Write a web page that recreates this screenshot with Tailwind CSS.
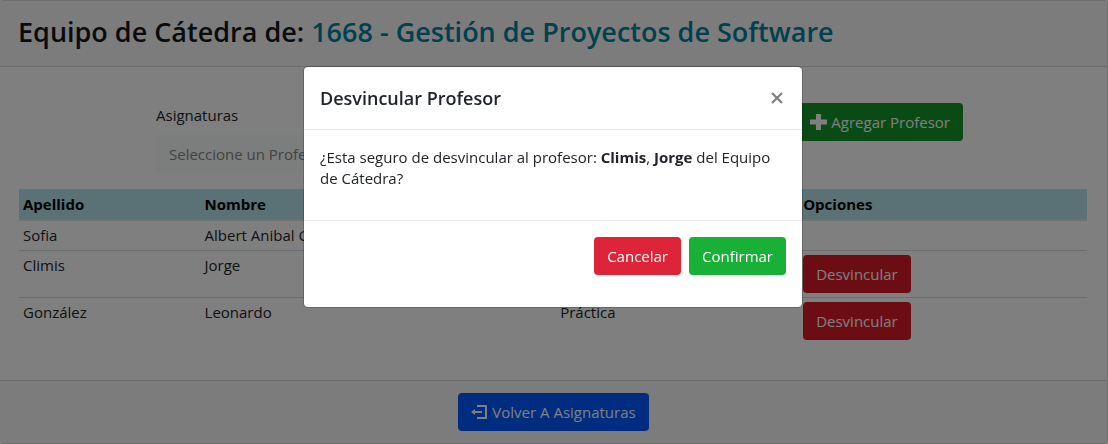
<!DOCTYPE html>
<html lang="es">
<head>
<meta charset="utf-8">
<meta name="viewport" content="width=device-width, initial-scale=1">
<title>Equipo de Cátedra</title>
<script src="https://cdn.jsdelivr.net/npm/@tailwindcss/browser@4"></script>
</head>
<body class="bg-white font-['Open_Sans',sans-serif] text-[15px] leading-[21px] text-[#212529]">
<main class="flex min-h-screen flex-col rounded border border-l-0 border-[#dfdfdf]">
  <header class="border-b border-[#d4d4d4] bg-[#f9f9f9] pt-2 pr-5 pb-3 pl-[18px]">
    <h1 class="text-[27px] leading-[45px] font-semibold text-[#141619]">Equipo de Cátedra de: <span class="text-[#00839a]">1668 - Gestión de Proyectos de Software</span></h1>
  </header>
  <section class="grow pt-9 pr-5 pb-9 pl-[19px]">
    <div class="mb-4 flex items-start justify-between pr-[124px] pl-[137px]">
      <div class="w-40">
        <label for="profesor" class="mt-[2px] mb-[9px] block">Asignaturas</label>
        <input id="profesor" type="text" placeholder="Seleccione un Profesor" class="h-[38px] w-full rounded bg-[#f8fafb] pl-[13px] placeholder:text-[#868686]">
      </div>
      <button type="button" class="flex h-[38px] items-center gap-1 rounded bg-[#14952a] px-[13px] text-white">
        <svg class="h-4 w-[17px]" viewBox="0 0 17 16" fill="currentColor" aria-hidden="true"><path d="M6 0h5v5.500h6v5h-6V16H6v-5.500H0v-5h6z"/></svg>
        Agregar Profesor
      </button>
    </div>
    <table class="w-full table-fixed border-separate border-spacing-0 text-left [&_td]:p-1 [&_td]:align-top [&_th]:p-1">
      <colgroup><col class="w-[17%]"><col class="w-[33.300%]"><col class="w-[22.750%]"><col></colgroup>
      <thead>
        <tr class="bg-[#b4e2ec] text-black [&>*]:border-t [&>*]:border-b-2 [&>*]:border-t-[#d0dfe3] [&>*]:border-b-[#dee2e6]">
          <th scope="col">Apellido</th><th scope="col">Nombre</th><td></td><th scope="col">Opciones</th>
        </tr>
      </thead>
      <tbody>
        <tr><td>Sofia</td><td>Albert Anibal G</td><td></td><td></td></tr>
        <tr class="[&>td]:border-t [&>td]:border-[#d5d8dc]"><td>Climis</td><td>Jorge</td><td></td><td><button type="button" class="block h-[38px] rounded bg-[#d71a27] px-[13px] text-white">Desvincular</button></td></tr>
        <tr class="[&>td]:border-t [&>td]:border-[#d5d8dc]"><td>González</td><td>Leonardo</td><td>Práctica</td><td><button type="button" class="block h-[38px] rounded bg-[#d71a27] px-[13px] text-white">Desvincular</button></td></tr>
      </tbody>
    </table>
  </section>
  <footer class="flex justify-center border-t border-[#d4d4d4] bg-[#f9f9f9] py-3">
    <a href="#" class="flex h-[38px] items-center gap-1 rounded bg-[#005aff] px-[13px] text-white">
      <svg class="h-4 w-[17px]" viewBox="0 0 17 16" fill="none" stroke="currentColor" stroke-width="2" aria-hidden="true"><path d="M6 2h9v12H6M3 8h8"/><path d="M0 8l4-3v6z" fill="currentColor" stroke="none"/></svg>
      Volver A Asignaturas
    </a>
  </footer>
</main>
<div class="fixed inset-0 flex items-start justify-center bg-black/50 pt-[66px] pr-[2px]">
  <div role="dialog" aria-modal="true" aria-labelledby="modal-title" class="w-full max-w-[500px] rounded-[5px] border border-black/20 bg-white bg-clip-padding pb-4">
    <div class="flex items-center justify-between border-b border-[#e9ecef] p-4">
      <h2 id="modal-title" class="text-[18px] leading-[30px] font-semibold">Desvincular Profesor</h2>
      <button type="button" aria-label="Cerrar" class="flex size-[18px] items-center justify-center text-[#7f7f7f]">
        <svg class="size-3" viewBox="0 0 12 12" fill="none" stroke="currentColor" stroke-width="2.200" aria-hidden="true"><path d="M1 1l10 10M11 1L1 11"/></svg>
      </button>
    </div>
    <div class="px-4 pt-[17px] pb-[31px]">
      <p>¿Esta seguro de desvincular al profesor: <strong>Climis</strong>, <strong>Jorge</strong> del Equipo de Cátedra?</p>
    </div>
    <div class="flex justify-end gap-2 border-t border-[#e9ecef] p-4">
      <button type="button" class="h-[38px] rounded bg-[#de2439] px-[13px] text-white">Cancelar</button>
      <button type="button" class="h-[38px] rounded bg-[#19b038] px-[13px] text-white">Confirmar</button>
    </div>
  </div>
</div>
</body>
</html>
